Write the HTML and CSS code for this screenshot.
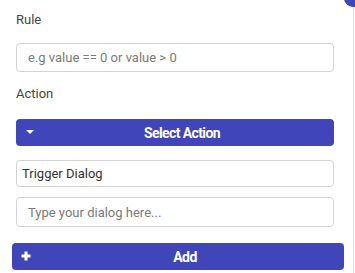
FILE: index.html
```html
<!DOCTYPE html>
<html lang="en">
<head>
    <meta charset="UTF-8">
    <title>Rule Editor</title>
    <link rel="stylesheet" href="styles.css">
</head>
<body>
    <div class="panel">
        <span class="close-badge"></span>
        <label class="field-label">Rule</label>
        <input class="text-input rule-input" type="text" placeholder="e.g value == 0 or value > 0">

        <label class="field-label action-label">Action</label>
        <button class="select-button">
            <span class="caret"></span>
            Select Action
        </button>

        <input class="text-input trigger-input" type="text" value="Trigger Dialog">
        <input class="text-input dialog-input" type="text" placeholder="Type your dialog here...">

        <button class="add-button">
            <svg class="plus" width="10" height="10" viewBox="0 0 10 10">
                <path d="M5 0.5v9M0.5 5h9" stroke="#fff" stroke-width="3"/>
            </svg>
            Add
        </button>
    </div>
</body>
</html>
```

FILE: styles.css
```css
body {
    margin: 0;
    padding: 0;
    font-family: Roboto, "Liberation Sans", Arial, sans-serif;
    background-color: #fff;
    overflow: hidden;
}

.panel {
    position: relative;
    width: 354px;
    height: 273px;
    box-sizing: border-box;
    padding: 12px 19px 0 16px;
    border-right: 1px solid #dedede;
    display: flex;
    flex-direction: column;
    align-items: stretch;
}

.close-badge {
    position: absolute;
    top: -11px;
    right: -9px;
    width: 18px;
    height: 18px;
    border-radius: 50%;
    background-color: #4045b9;
}

.close-badge::after {
    content: '';
    position: absolute;
    left: 2px;
    top: 8px;
    width: 4px;
    height: 3px;
    background-color: #fff;
}

.field-label {
    font-size: 13px;
    line-height: 16px;
    color: #444;
}

.action-label {
    margin-top: 14px;
}

.text-input {
    box-sizing: border-box;
    width: 100%;
    font-family: Roboto, "Liberation Sans", Arial, sans-serif;
    font-size: 13px;
    color: #333;
    border: 1px solid #d3d3d3;
    border-radius: 4px;
    outline: none;
    background-color: #fff;
}

.text-input::placeholder {
    color: #7a7a7a;
}

.rule-input {
    margin-top: 15px;
    height: 29px;
    padding: 0 11px;
}

.trigger-input {
    margin-top: 14px;
    height: 27px;
    padding: 0 5px;
}

.dialog-input {
    margin-top: 10px;
    height: 30px;
    padding: 0 11px;
}

.select-button,
.add-button {
    position: relative;
    height: 27px;
    border: none;
    border-radius: 4px;
    background-color: #4045b9;
    color: #fff;
    font-family: Roboto, "Liberation Sans", Arial, sans-serif;
    font-size: 14px;
    font-weight: bold;
    letter-spacing: -0.6px;
    padding: 0 0 0 14px;
    cursor: pointer;
}

.select-button {
    margin-top: 17px;
}

.add-button {
    margin: 16px -10px 0 -4px;
}

.caret {
    position: absolute;
    left: 10px;
    top: 11px;
    width: 0;
    height: 0;
    border-left: 4px solid transparent;
    border-right: 4px solid transparent;
    border-top: 4px solid #fff;
}

.plus {
    position: absolute;
    left: 9px;
    top: 8px;
}
```
